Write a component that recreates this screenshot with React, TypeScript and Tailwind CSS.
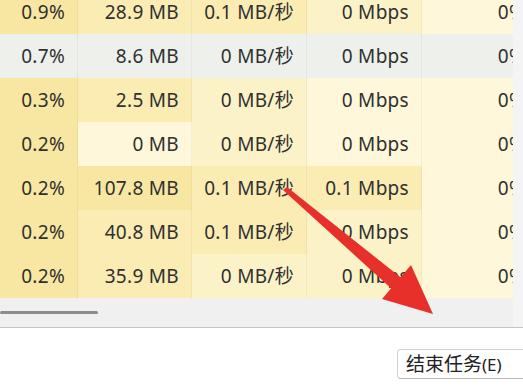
import React from 'react';

type Cell = { text: string; bg: string };

// heat levels, darkest -> lightest
const A = 'bg-[#f8e7a2]';
const B = 'bg-[#faecb3]';
const C = 'bg-[#fcf2c8]';
const D = 'bg-[#fff7da]';
const G = 'bg-[#eef0ec]';

const rows: Cell[][] = [
  [{ text: '0.9%', bg: A }, { text: '28.9 MB', bg: B }, { text: '0.1 MB/秒', bg: B }, { text: '0 Mbps', bg: C }, { text: '0%', bg: D }],
  [{ text: '0.7%', bg: G }, { text: '8.6 MB', bg: G }, { text: '0 MB/秒', bg: G }, { text: '0 Mbps', bg: G }, { text: '0%', bg: G }],
  [{ text: '0.3%', bg: A }, { text: '2.5 MB', bg: B }, { text: '0 MB/秒', bg: C }, { text: '0 Mbps', bg: D }, { text: '0%', bg: D }],
  [{ text: '0.2%', bg: A }, { text: '0 MB', bg: D }, { text: '0 MB/秒', bg: C }, { text: '0 Mbps', bg: D }, { text: '0%', bg: D }],
  [{ text: '0.2%', bg: A }, { text: '107.8 MB', bg: A }, { text: '0.1 MB/秒', bg: B }, { text: '0.1 Mbps', bg: B }, { text: '0%', bg: D }],
  [{ text: '0.2%', bg: A }, { text: '40.8 MB', bg: B }, { text: '0.1 MB/秒', bg: B }, { text: '0 Mbps', bg: C }, { text: '0%', bg: D }],
  [{ text: '0.2%', bg: A }, { text: '35.9 MB', bg: B }, { text: '0 MB/秒', bg: C }, { text: '0 Mbps', bg: C }, { text: '0%', bg: D }],
];

const widths = ['w-[78px]', 'w-[114px]', 'w-[115px]', 'w-[115px]', 'w-[116px]'];

export default function App() {
  return (
    <div
      className="relative w-[523px] h-[389px] overflow-hidden bg-white text-[#303030]"
      style={{ fontFamily: '"Noto Sans", "Noto Sans CJK SC", sans-serif' }}
    >
      <div className="flex h-[328px] border-b border-[#c4c4c4]">
        {/* table + horizontal scrollbar */}
        <div className="flex flex-col w-[513px] overflow-hidden">
          <div className="h-[298px] overflow-hidden">
            <div className="-mt-[10px]">
              {rows.map((row, i) => (
                <div key={i} className="flex h-[44px]">
                  {row.map((c, j) => (
                    <div
                      key={j}
                      className={`${widths[j]} ${c.bg} shrink-0 flex items-center justify-end pr-3 text-[19px] tracking-[0.3px] border-r border-black/[0.04] whitespace-nowrap`}
                    >
                      {c.text}
                    </div>
                  ))}
                </div>
              ))}
            </div>
          </div>
          <div className="flex-1 bg-[#f0f0f0] flex items-center">
            <div className="w-[98px] h-[3px] rounded-full bg-[#8c8c8c]" />
          </div>
        </div>
        {/* vertical scrollbar strip */}
        <div className="flex-1 bg-[#f4f4f4]" />
      </div>

      {/* footer */}
      <div className="flex pt-[21px] pl-[397px]">
        <button className="shrink-0 h-[30px] pl-2 pr-6 rounded border border-[#d0d0d0] border-b-[#b8b8b8] bg-white text-[19px] leading-none text-[#222] whitespace-nowrap">
          结束任务<span className="text-[17px]">(E)</span>
        </button>
      </div>

      {/* red annotation arrow */}
      <svg className="absolute left-0 top-0 pointer-events-none" width="523" height="389" viewBox="0 0 523 389">
        <polygon points="283,190 287,187 404,280 394,291" fill="#e8302a" />
        <polygon points="433,314 382,299 411,265" fill="#e8302a" />
      </svg>
    </div>
  );
}
